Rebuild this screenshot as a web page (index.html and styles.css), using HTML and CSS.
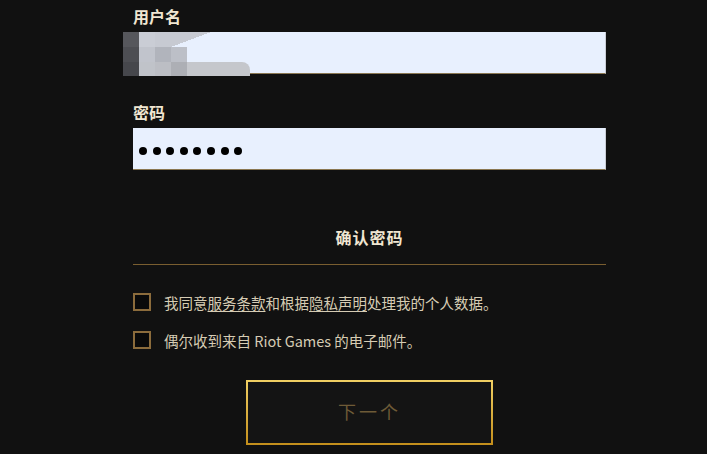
FILE: index.html
```html
<!DOCTYPE html>
<html lang="zh-CN">
<head>
  <meta charset="UTF-8">
  <title>注册</title>
  <link rel="stylesheet" href="styles.css">
</head>
<body>
  <form class="signup">
    <div class="field">
      <div class="label">用户名</div>
      <div class="input">
        <div class="mosaic">
          <span class="m a"></span><span class="m b"></span><span class="m c"></span><span class="m taper"></span><span class="m none"></span>
          <span class="m d"></span><span class="m e"></span><span class="m f"></span><span class="m g"></span><span class="m none"></span>
          <span class="m h"></span><span class="m i"></span><span class="m j"></span><span class="m k"></span><span class="m tail"></span>
        </div>
      </div>
    </div>

    <div class="field second">
      <div class="label">密码</div>
      <div class="input">
        <div class="dots">
          <i></i><i></i><i></i><i></i><i></i><i></i><i></i><i></i>
        </div>
      </div>
    </div>

    <div class="confirm">确认密码</div>
    <div class="rule"></div>

    <label class="check first">
      <span class="box"></span>
      <span>我同意<u>服务条款</u>和根据<u>隐私声明</u>处理我的个人数据。</span>
    </label>
    <label class="check">
      <span class="box"></span>
      <span>偶尔收到来自 Riot Games 的电子邮件。</span>
    </label>

    <div class="actions">
      <button type="button" class="next">下一个</button>
    </div>
  </form>
</body>
</html>
```

FILE: styles.css
```css
* {
  margin: 0;
  padding: 0;
  box-sizing: border-box;
}

body {
  background: #111111;
  font-family: "Noto Sans CJK SC", "Noto Sans", sans-serif;
  color: #f0e6d2;
  height: 454px;
  overflow: hidden;
}

.signup {
  width: 473px;
  margin-left: 133px;
  padding-top: 6px;
}

.label {
  height: 20px;
  line-height: 20px;
  font-size: 16px;
  font-weight: bold;
  color: #f0e6d2;
  margin-bottom: 6px;
}

.field.second {
  margin-top: 28px;
}

.input {
  position: relative;
  height: 42px;
  background: #e8f0fe;
  border-bottom: 1px solid #8a7752;
  border-right: 1px solid #c9cdd6;
}

.mosaic {
  position: absolute;
  left: -10px;
  top: 0;
  display: grid;
  grid-template-columns: 16px 16px 16px 16px 63px;
  grid-template-rows: 15px 15px 14px;
}

.m.a { background: #56575c; }
.m.b { background: #cacdd5; }
.m.c { background: #c7cad2; }
.m.taper {
  background: linear-gradient(to bottom right, #c7cad2 0 50%, transparent 50%);
  width: 40px;
}
.m.d { background: #4d4e53; }
.m.e { background: #c1c4cc; }
.m.f { background: #b1b4bc; }
.m.g { background: #bcbfc7; }
.m.h { background: #46474c; }
.m.i { background: #c0c3c9; }
.m.j { background: #bcbec4; }
.m.k { background: #adafb5; }
.m.tail {
  background: #c5c7cc;
  border-top-right-radius: 8px;
}

.dots {
  display: flex;
  align-items: center;
  gap: 5.6px;
  height: 100%;
  padding-left: 6px;
  padding-top: 4px;
}

.dots i {
  width: 8px;
  height: 8px;
  border-radius: 50%;
  background: #000;
}

.confirm {
  margin-top: 57px;
  height: 20px;
  line-height: 20px;
  text-align: center;
  font-size: 16px;
  font-weight: bold;
  letter-spacing: 1px;
  color: #f0e6d2;
}

.rule {
  margin-top: 17px;
  height: 1px;
  background: #7a5e30;
}

.check {
  display: flex;
  align-items: center;
  gap: 13px;
  font-size: 14.5px;
  color: #d6ccb4;
  margin-top: 20px;
  height: 18px;
}

.check.first {
  margin-top: 28px;
}

.check u {
  text-decoration: underline;
  text-underline-offset: 2px;
}

.box {
  width: 18px;
  height: 18px;
  flex: none;
  border: 2px solid #8c6c3c;
  background: #0a0a0a;
}

.actions {
  display: flex;
  justify-content: center;
  margin-top: 31px;
}

.next {
  width: 247px;
  height: 65px;
  background: #141414;
  border: 2px solid transparent;
  border-image: linear-gradient(to bottom, #f0cf63, #c48f1c) 1;
  font-family: "Noto Sans CJK SC", sans-serif;
  font-size: 18px;
  letter-spacing: 3px;
  color: #6e5b37;
  cursor: pointer;
  padding-bottom: 4px;
}
```
